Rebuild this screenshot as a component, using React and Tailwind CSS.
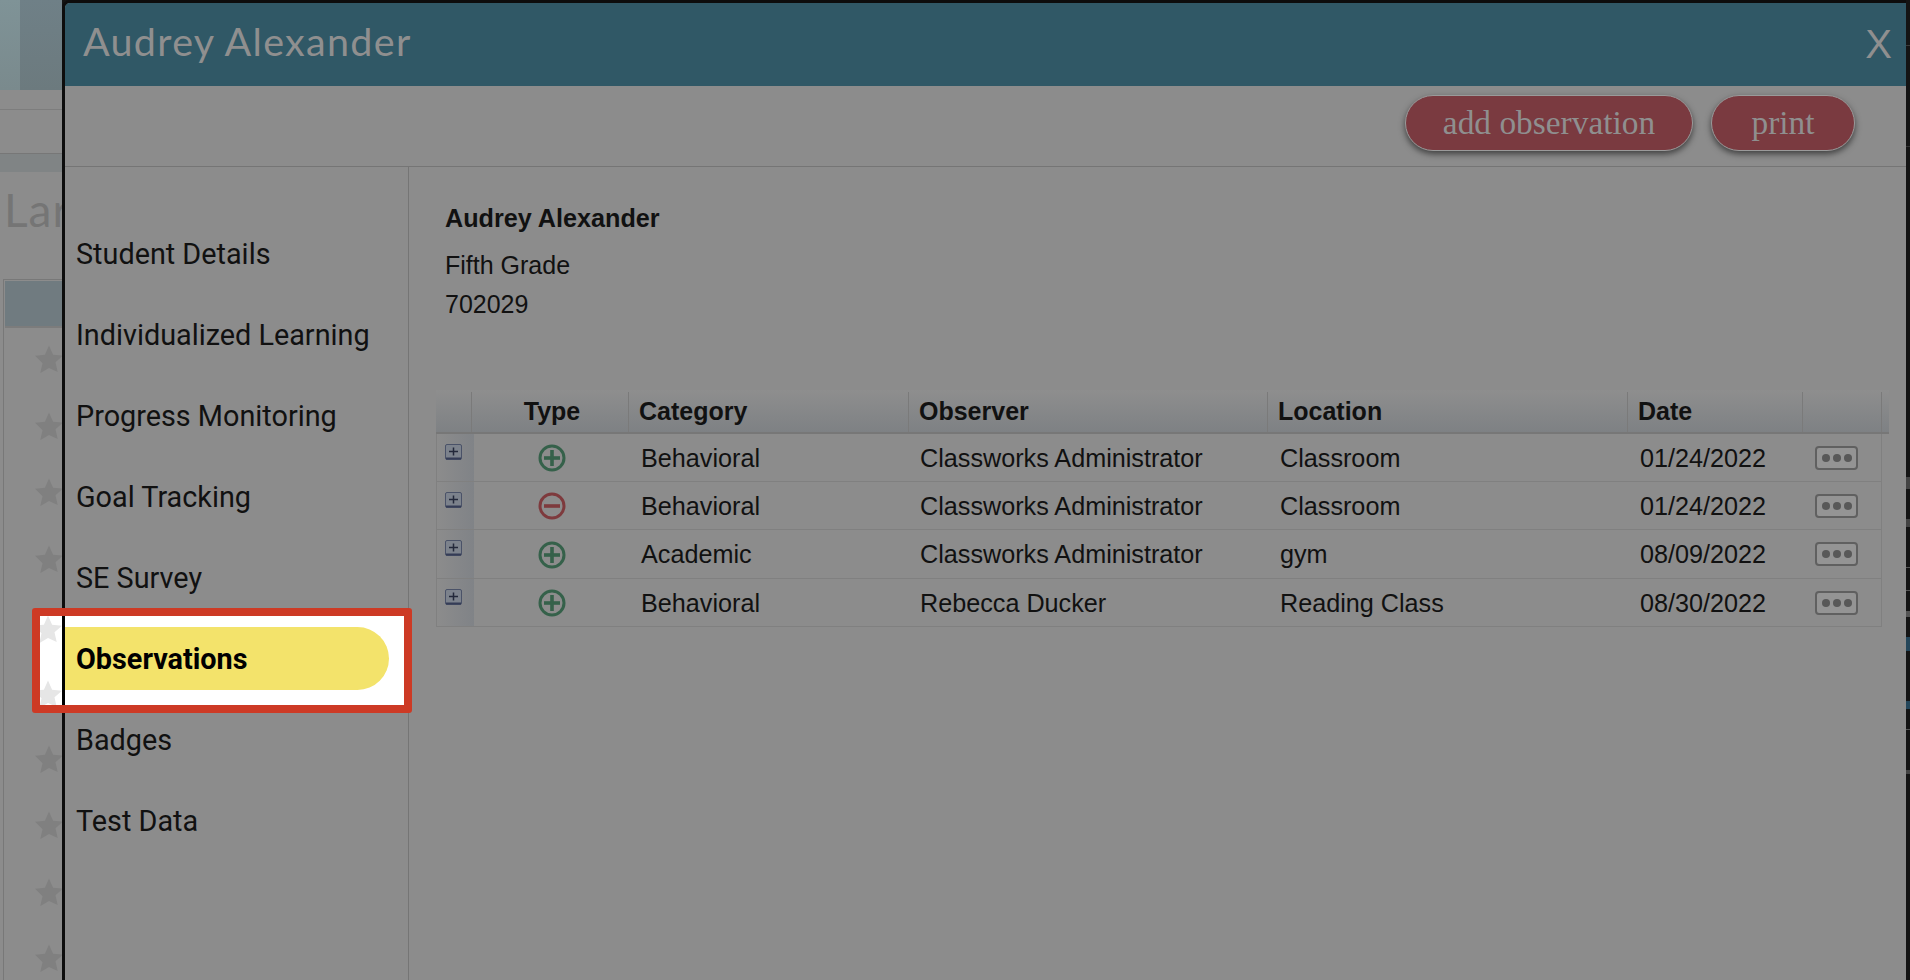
import React from 'react';

const navItems = ['Student Details', 'Individualized Learning', 'Progress Monitoring', 'Goal Tracking', 'SE Survey', 'Observations', 'Badges', 'Test Data'];

const observations = [
  { type: 'plus', category: 'Behavioral', observer: 'Classworks Administrator', location: 'Classroom', date: '01/24/2022', height: 'h-[48px]' },
  { type: 'minus', category: 'Behavioral', observer: 'Classworks Administrator', location: 'Classroom', date: '01/24/2022', height: 'h-[48px]' },
  { type: 'plus', category: 'Academic', observer: 'Classworks Administrator', location: 'gym', date: '08/09/2022', height: 'h-[49px]' },
  { type: 'plus', category: 'Behavioral', observer: 'Rebecca Ducker', location: 'Reading Class', date: '08/30/2022', height: 'h-[48px]' },
];

const starColumn = [0, 1, 2, 3, 4, 5, 6, 7, 8, 9];
const specks = [
  { gap: 'mt-[45px]', h: 'h-[1px]', color: 'bg-[#3a3a3a]' },
  { gap: 'mt-[100px]', h: 'h-[1px]', color: 'bg-[#333333]' },
  { gap: 'mt-[330px]', h: 'h-[12px]', color: 'bg-[#444444]' },
  { gap: 'mt-[30px]', h: 'h-[8px]', color: 'bg-[#444444]' },
  { gap: 'mt-[40px]', h: 'h-[1px]', color: 'bg-[#555555]' },
  { gap: 'mt-[22px]', h: 'h-[1px]', color: 'bg-[#555555]' },
  { gap: 'mt-[20px]', h: 'h-[6px]', color: 'bg-[#555555]' },
  { gap: 'mt-[20px]', h: 'h-[14px]', color: 'bg-[#24465a]' },
  { gap: 'mt-[50px]', h: 'h-[8px]', color: 'bg-[#24465a]' },
  { gap: 'mt-[20px]', h: 'h-[1px]', color: 'bg-[#555555]' },
  { gap: 'mt-[40px]', h: 'h-[4px]', color: 'bg-[#444444]' },
];

function Star({ className }) {
  return (
    <svg viewBox="0 0 28 28" className={className}>
      <path d="M14 0.5l4.1 9.2 9.9 1-7.5 6.6 2.2 9.8L14 22.9l-8.7 5.2 2.2-9.8L0 10.7l9.9-1z" fill="currentColor" />
    </svg>
  );
}

function TypeIcon({ type }) {
  const color = type === 'plus' ? '#35614a' : '#7e3a3d';
  return (
    <svg width="28" height="28" viewBox="0 0 28 28" className="mt-[1px]">
      <circle cx="14" cy="14" r="12" fill="none" stroke={color} strokeWidth="3" />
      <path d="M6 14h16" stroke={color} strokeWidth="3.6" />
      {type === 'plus' && <path d="M14 6v16" stroke={color} strokeWidth="3.6" />}
    </svg>
  );
}

function ExpandIcon() {
  return (
    <svg width="17" height="16" viewBox="0 0 17 16" className="mt-[10px] ml-[8px]">
      <rect x="0.5" y="0.5" width="16" height="15" rx="1.5" fill="#7c828c" stroke="#4a5268" />
      <path d="M1 14.5h15" stroke="#353c56" strokeWidth="2" />
      <path d="M4 7.5h9M8.5 3.5v8" stroke="#23283a" strokeWidth="1.5" />
    </svg>
  );
}

function MoreButton() {
  return (
    <div className="ml-[11px] flex h-[24px] w-[43px] items-center justify-center gap-[3px] rounded-[4px] border-2 border-[#606060] bg-[#949494]">
      <span className="h-[8px] w-[8px] rounded-full bg-[#585858]" />
      <span className="h-[8px] w-[8px] rounded-full bg-[#585858]" />
      <span className="h-[8px] w-[8px] rounded-full bg-[#585858]" />
    </div>
  );
}

function BackgroundStrip() {
  return (
    <div className="flex h-full w-[62px] shrink-0 flex-col overflow-hidden bg-[#8c8c8c]">
      <div className="flex h-[90px] shrink-0">
        <div className="w-[20px] bg-gradient-to-b from-[#7f9397] to-[#7a8a8d]" />
        <div className="flex-1 bg-gradient-to-b from-[#6f8087] to-[#6c7a7e]" />
      </div>
      <div className="mt-[19px] h-[1px] shrink-0 bg-[#7d7d7d]" />
      <div className="mt-[43px] h-[19px] shrink-0 border-t border-[#777777] bg-[#808485]" />
      <div className="mt-[10px] shrink-0 pl-[4px] font-['Lato',sans-serif] text-[46px] leading-[56px] tracking-[1px] text-[#757575] whitespace-nowrap">Lar</div>
      <div className="mt-[41px] ml-[3px] flex-1 border-t border-l border-[#787878] pt-[1px] pl-[1px]">
        <div className="h-[47px] border-b-2 border-[#7c7c7c] bg-[#707b80]" />
        <div className="flex flex-col gap-[38.6px] pt-[17px] pl-[30px]">
          {starColumn.map(i => (
            <Star key={i} className="h-[28px] w-[28px] shrink-0 text-[#808080]" />
          ))}
        </div>
      </div>
    </div>
  );
}

function Highlight() {
  return (
    <div className="absolute top-[608px] left-[32px] z-10 flex h-[105px] w-[380px] overflow-hidden rounded-[3px] border-[8px] border-[#cd3a25] bg-white">
      <Star className="absolute top-[-1px] left-[-6px] h-[28px] w-[28px] text-[#e6e6e6]" />
      <Star className="absolute top-[64px] left-[-6px] h-[28px] w-[28px] text-[#e6e6e6]" />
      <div className="w-[22px] shrink-0" />
      <div className="z-10 w-[3px] shrink-0 bg-black" />
      <div className="mt-[11px] flex h-[63px] w-[324px] items-center rounded-r-[32px] bg-[#f3e36b] pt-[2px] pl-[11px] font-['Roboto',sans-serif] text-[28.8px] font-bold text-black">
        Observations
      </div>
    </div>
  );
}

export default function App() {
  return (
    <div className="relative flex h-[980px] w-[1910px] overflow-hidden bg-[#141414] font-['Liberation_Sans',sans-serif]">
      <BackgroundStrip />
      <div className="flex h-full w-[1844px] shrink-0 flex-col overflow-hidden rounded-tl-lg border-t-[3px] border-l-[3px] border-[#0d0d0d] bg-[#8c8c8c] text-[#111111]">
        <div className="flex h-[83px] shrink-0 items-center justify-between bg-[#305866] pr-[14px] pl-[18px] text-[#8f8f8f]">
          <span className="mt-[-8px] font-['Lato',sans-serif] text-[39.5px] tracking-[1.3px]">Audrey Alexander</span>
          <span className="mt-[-2px] text-[40px] font-normal">X</span>
        </div>
        <div className="flex h-[81px] shrink-0 items-center justify-end gap-[18px] border-b border-[#757575] pr-[51px] font-['Liberation_Serif',serif] text-[33.4px] text-[#8f8f8f]">
          <button className="mt-[-7px] h-[56px] w-[288px] rounded-[28px] border border-[#9a9a9a] bg-[#7a3a40] pt-[1px] shadow-[0_3px_6px_rgba(0,0,0,0.55)]">add observation</button>
          <button className="mt-[-7px] h-[56px] w-[144px] rounded-[28px] border border-[#9a9a9a] bg-[#7a3a40] pt-[1px] shadow-[0_3px_6px_rgba(0,0,0,0.55)]">print</button>
        </div>
        <div className="flex flex-1">
          <nav className="w-[344px] shrink-0 border-r border-[#757575] pt-[47px] font-['Roboto',sans-serif] text-[28.8px]">
            {navItems.map(item => (
              <div key={item} className="flex h-[81px] items-center pl-[11px]">
                {item !== 'Observations' && item}
              </div>
            ))}
          </nav>
          <main className="flex-1 pl-[27px]">
            <div className="pt-[33px] pl-[9px] text-[25px]">
              <div className="h-[46px] text-[25.2px] leading-[36px] font-bold">Audrey Alexander</div>
              <div className="h-[39px] leading-[38px]">Fifth Grade</div>
              <div className="h-[38px] leading-[38px]">702029</div>
            </div>
            <div className="mt-[67px] w-[1453px]">
              <div className="grid h-[44px] grid-cols-[36px_157px_280px_359px_360px_175px_79px_7px] border-b-2 border-[#777777] bg-gradient-to-b from-[#8e8e8e] to-[#7e8184] pt-[2px] text-[25px] font-bold">
                <div className="border-r border-[#7a7a7a]" />
                <div className="flex items-center justify-center border-r border-[#7a7a7a] pl-[4px]">Type</div>
                <div className="flex items-center border-r border-[#7a7a7a] pl-[10px]">Category</div>
                <div className="flex items-center border-r border-[#7a7a7a] pl-[10px]">Observer</div>
                <div className="flex items-center border-r border-[#7a7a7a] pl-[10px]">Location</div>
                <div className="flex items-center border-r border-[#7a7a7a] pl-[10px]">Date</div>
                <div className="border-r border-[#7a7a7a]" />
                <div />
              </div>
              {observations.map((row, i) => (
                <div key={i} className={`grid w-[1446px] grid-cols-[37px_156px_280px_359px_360px_175px_79px] border-r border-b border-l border-[#808080] text-[25.2px] ${row.height}`}>
                  <div className="bg-gradient-to-r from-[#8c8c8c] to-[#808387]">
                    <ExpandIcon />
                  </div>
                  <div className="flex items-center justify-center"><TypeIcon type={row.type} /></div>
                  <div className="flex items-center pt-[2px] pl-[11px]">{row.category}</div>
                  <div className="flex items-center pt-[2px] pl-[10px]">{row.observer}</div>
                  <div className="flex items-center pt-[2px] pl-[11px]">{row.location}</div>
                  <div className="flex items-center pt-[2px] pl-[11px]">{row.date}</div>
                  <div className="flex items-center"><MoreButton /></div>
                </div>
              ))}
            </div>
          </main>
        </div>
      </div>
      <div className="flex-1">
        {specks.map((s, i) => (
          <div key={i} className={`${s.gap} ${s.h} ${s.color}`} />
        ))}
      </div>
      <Highlight />
    </div>
  );
}
